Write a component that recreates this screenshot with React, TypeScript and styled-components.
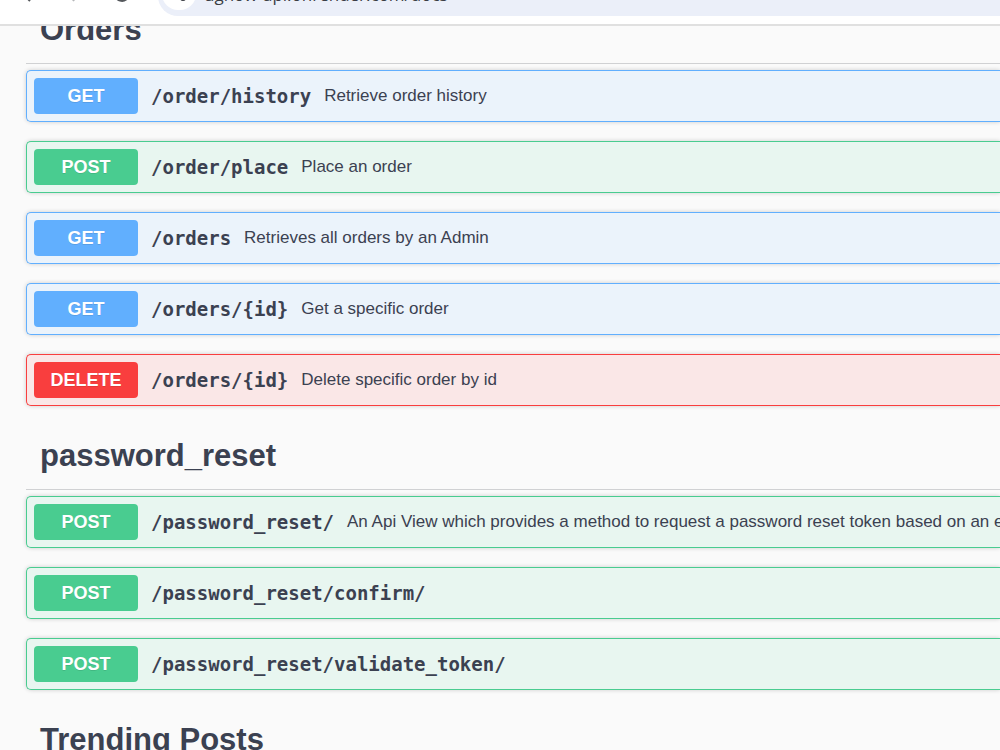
import React from "react";
import styled, { createGlobalStyle } from "styled-components";

type Method = "GET" | "POST" | "DELETE";

const palette: Record<Method, { solid: string; tint: string }> = {
  GET: { solid: "#61affe", tint: "#ebf3fb" },
  POST: { solid: "#49cc90", tint: "#e8f6f0" },
  DELETE: { solid: "#f93e3e", tint: "#fae7e7" },
};

const GlobalStyle = createGlobalStyle`
  * { box-sizing: border-box; }
  body {
    margin: 0;
    background: #fafafa;
    color: #3b4151;
    font-family: "Liberation Sans", Arial, sans-serif;
  }
`;

const Page = styled.div`
  display: flex;
  flex-direction: column;
  height: 100vh;
  overflow: hidden;
`;

const BrowserBar = styled.header`
  display: flex;
  flex: none;
  align-items: flex-end;
  height: 26px;
  padding-bottom: 8px;
  overflow: hidden;
  background: #fff;
  border-bottom: 2px solid #e0e0e0;
`;

const NavIcons = styled.div`
  display: flex;
  flex: none;
  width: 158px;
`;

const AddressField = styled.label`
  display: flex;
  flex: 1;
  align-items: center;
  gap: 8px;
  height: 40px;
  padding: 0 0 4px 4px;
  background: #ebeff9;
  border-radius: 20px 0 0 20px;
`;

const SiteButton = styled.button`
  display: flex;
  align-items: center;
  justify-content: center;
  flex: none;
  width: 34px;
  height: 32px;
  padding: 0;
  border: 0;
  border-radius: 16px;
  background: #fff;
`;

const AddressInput = styled.input`
  flex: 1;
  min-width: 0;
  height: 28px;
  padding: 0;
  border: 0;
  outline: 0;
  background: transparent;
  color: #3a3d44;
  font: 17px "Open Sans", sans-serif;
`;

const Viewport = styled.main`
  display: flex;
  flex: 1;
  flex-direction: column;
  min-height: 0;
  padding-left: 26px;
  overflow: hidden;
`;

const Section = styled.section<{ $scrolled?: boolean }>`
  flex: none;
  margin-top: ${(p) => (p.$scrolled ? "-20px" : "0")};
  margin-bottom: 26px;
`;

const Title = styled.h3`
  margin: 0 0 6px;
  padding: 6px 14px 15px;
  border-bottom: 1px solid #d0d1d3;
  font-size: 31px;
  line-height: 36px;
`;

const Operations = styled.div`
  display: flex;
  flex-direction: column;
  gap: 19px;
`;

const Operation = styled.button<{ $method: Method }>`
  display: flex;
  align-items: center;
  width: 100%;
  height: 52px;
  padding: 0 7px 1px;
  border: 1px solid ${(p) => palette[p.$method].solid};
  border-right: 0;
  border-radius: 5px 0 0 5px;
  background: ${(p) => palette[p.$method].tint};
  box-shadow: 0 0 4px rgba(0, 0, 0, 0.19);
  color: inherit;
  font-family: inherit;
  text-align: left;
  white-space: nowrap;
  overflow: hidden;
`;

const Badge = styled.span<{ $method: Method }>`
  flex: none;
  width: 104px;
  border-radius: 4px;
  background: ${(p) => palette[p.$method].solid};
  color: #fff;
  font-size: 18px;
  font-weight: 700;
  line-height: 36px;
  text-align: center;
  text-shadow: 0 1px 0 rgba(0, 0, 0, 0.1);
`;

const Path = styled.span`
  margin: 0 13px;
  font: 700 19px/24px "DejaVu Sans Mono", monospace;
`;

const Summary = styled.span`
  font-size: 17px;
  line-height: 24px;
`;

const groups: { name: string; items: { method: Method; path: string; summary?: string }[] }[] = [
  {
    name: "Orders",
    items: [
      { method: "GET", path: "/order/history", summary: "Retrieve order history" },
      { method: "POST", path: "/order/place", summary: "Place an order" },
      { method: "GET", path: "/orders", summary: "Retrieves all orders by an Admin" },
      { method: "GET", path: "/orders/{id}", summary: "Get a specific order" },
      { method: "DELETE", path: "/orders/{id}", summary: "Delete specific order by id" },
    ],
  },
  {
    name: "password_reset",
    items: [
      {
        method: "POST",
        path: "/password_reset/",
        summary: "An Api View which provides a method to request a password reset token based on an e",
      },
      { method: "POST", path: "/password_reset/confirm/" },
      { method: "POST", path: "/password_reset/validate_token/" },
    ],
  },
  { name: "Trending Posts", items: [] },
];

export default function App() {
  return (
    <Page>
      <GlobalStyle />
      <BrowserBar>
        <NavIcons>
          <svg width="158" height="40" viewBox="0 0 158 40" fill="none" stroke="#55585c" strokeWidth="2" aria-hidden="true">
            <path d="M30 10 L23 18 L30 25" />
            <path d="M70 10 L78 18 L73 25" stroke="#b5b7ba" />
            <path d="M129 18 A7 7 0 1 1 127 13" />
          </svg>
        </NavIcons>
        <AddressField>
          <SiteButton aria-label="Site information">
            <svg width="20" height="20" viewBox="0 0 20 20" fill="none" stroke="#3a3d44" strokeWidth="2" aria-hidden="true">
              <circle cx="5" cy="5" r="2" />
              <path d="M9 5h8M3 13h7" />
              <circle cx="14" cy="14" r="2" />
            </svg>
          </SiteButton>
          <AddressInput aria-label="Address" defaultValue="ugnow-api.onrender.com/docs" />
        </AddressField>
      </BrowserBar>
      <Viewport>
        {groups.map((group, index) => (
          <Section key={group.name} $scrolled={index === 0}>
            <Title>{group.name}</Title>
            <Operations>
              {group.items.map((item) => (
                <Operation key={item.method + item.path} $method={item.method} type="button">
                  <Badge $method={item.method}>{item.method}</Badge>
                  <Path>{item.path}</Path>
                  {item.summary && <Summary>{item.summary}</Summary>}
                </Operation>
              ))}
            </Operations>
          </Section>
        ))}
      </Viewport>
    </Page>
  );
}
